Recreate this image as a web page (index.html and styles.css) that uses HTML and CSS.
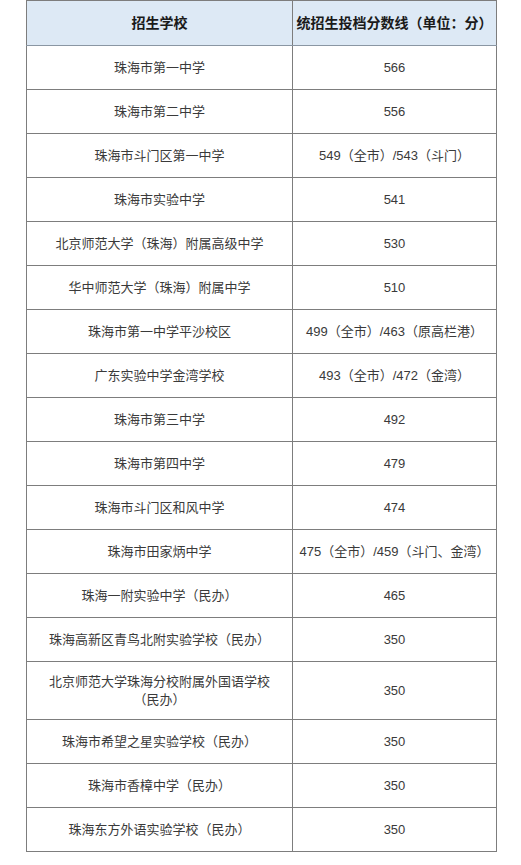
FILE: index.html
```html
<!DOCTYPE html>
<html lang="zh-CN">
<head>
<meta charset="utf-8">
<title>招生学校统招生投档分数线</title>
<link rel="stylesheet" href="styles.css">
</head>
<body>
<table class="score-table">
  <colgroup>
    <col class="col-school">
    <col class="col-score">
  </colgroup>
  <thead>
    <tr><th>招生学校</th><th>统招生投档分数线（单位：分）</th></tr>
  </thead>
  <tbody>
    <tr><td>珠海市第一中学</td><td>566</td></tr>
    <tr><td>珠海市第二中学</td><td>556</td></tr>
    <tr><td>珠海市斗门区第一中学</td><td>549（全市）/543（斗门）</td></tr>
    <tr><td>珠海市实验中学</td><td>541</td></tr>
    <tr><td>北京师范大学（珠海）附属高级中学</td><td>530</td></tr>
    <tr><td>华中师范大学（珠海）附属中学</td><td>510</td></tr>
    <tr><td>珠海市第一中学平沙校区</td><td>499（全市）/463（原高栏港）</td></tr>
    <tr><td>广东实验中学金湾学校</td><td>493（全市）/472（金湾）</td></tr>
    <tr><td>珠海市第三中学</td><td>492</td></tr>
    <tr><td>珠海市第四中学</td><td>479</td></tr>
    <tr><td>珠海市斗门区和风中学</td><td>474</td></tr>
    <tr><td>珠海市田家炳中学</td><td>475（全市）/459（斗门、金湾）</td></tr>
    <tr><td>珠海一附实验中学（民办）</td><td>465</td></tr>
    <tr><td>珠海高新区青鸟北附实验学校（民办）</td><td>350</td></tr>
    <tr class="tall"><td>北京师范大学珠海分校附属外国语学校<br>（民办）</td><td>350</td></tr>
    <tr><td>珠海市希望之星实验学校（民办）</td><td>350</td></tr>
    <tr><td>珠海市香樟中学（民办）</td><td>350</td></tr>
    <tr><td>珠海东方外语实验学校（民办）</td><td>350</td></tr>
  </tbody>
</table>
</body>
</html>
```

FILE: styles.css
```css
html, body {
  margin: 0;
  padding: 0;
  background: #ffffff;
}

body {
  font-family: "Liberation Sans", "Noto Sans CJK SC", sans-serif;
}

.score-table {
  border-collapse: collapse;
  table-layout: fixed;
  width: 470px;
  margin: 0 0 0 26px;
}

.col-school { width: 266px; }
.col-score { width: 204px; }

.score-table th,
.score-table td {
  border: 1px solid #7d7d7d;
  text-align: center;
  vertical-align: middle;
  padding: 0;
  line-height: 18px;
}

.score-table th {
  background: #dde9f5;
  border-bottom-color: #8a96a3;
  font-weight: bold;
  font-size: 14px;
  color: #1a1a1a;
  height: 44px;
}

.score-table td {
  font-size: 13px;
  color: #3a3a3a;
  height: 43px;
}

.score-table tr.tall td {
  height: 57px;
}
```
